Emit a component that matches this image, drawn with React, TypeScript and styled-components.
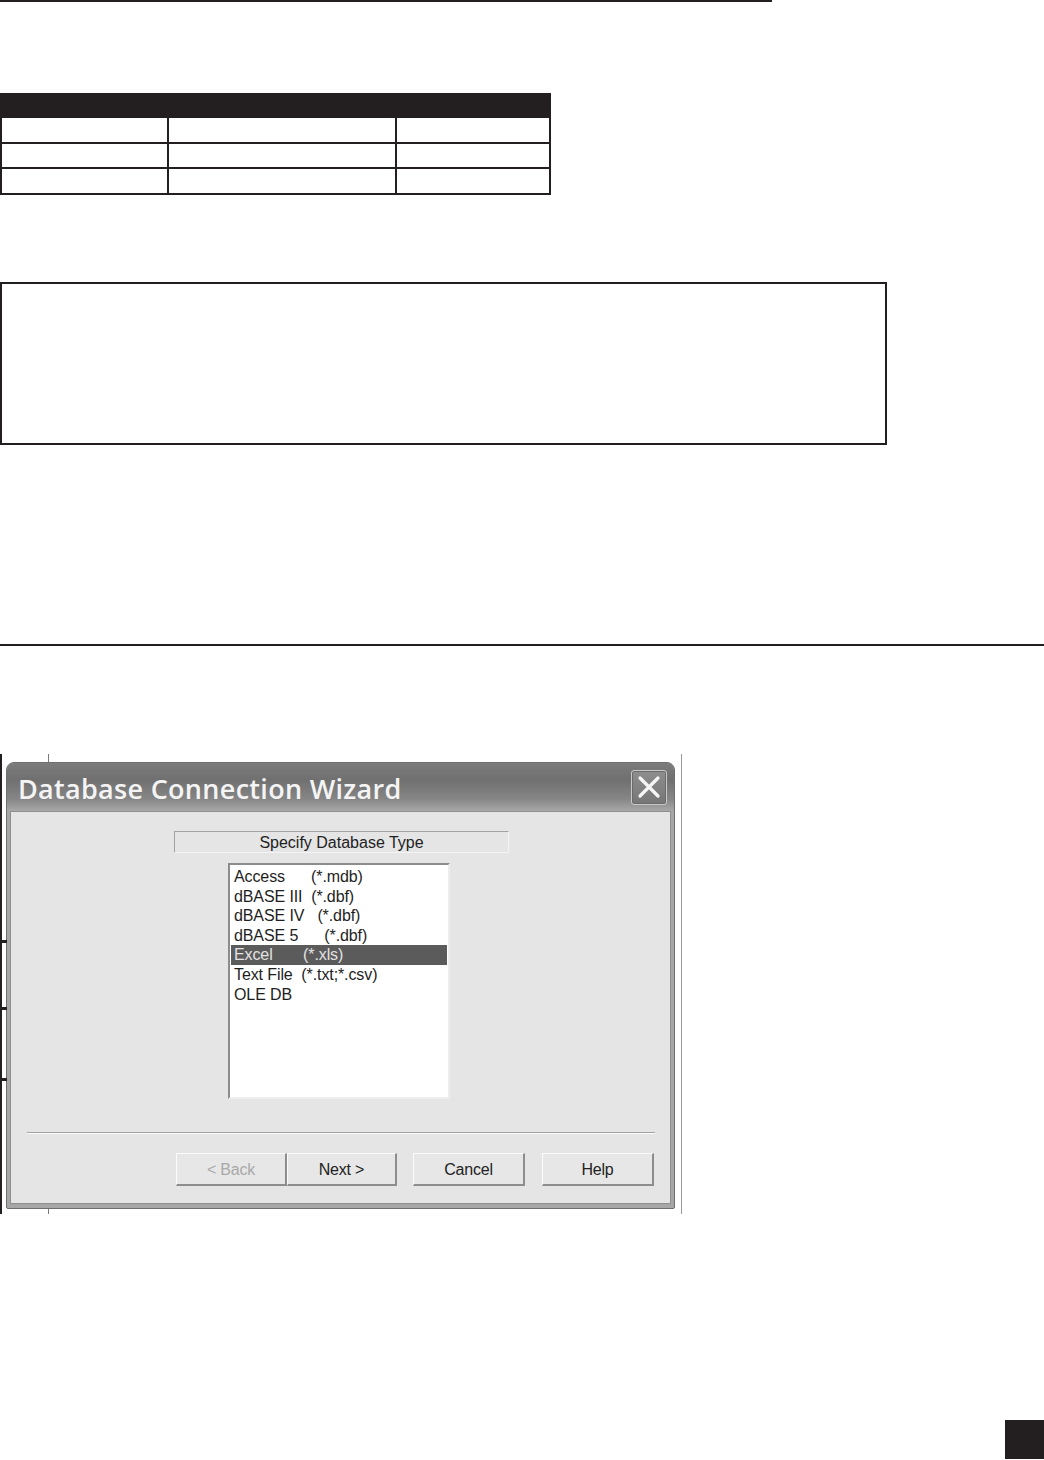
import React from 'react';
import styled, { createGlobalStyle } from 'styled-components';

const GlobalStyle = createGlobalStyle`
  html, body {
    margin: 0;
    padding: 0;
    background: #ffffff;
  }
  body {
    font-family: "Liberation Sans", Arial, sans-serif;
  }
`;

const Page = styled.div`
  width: 1044px;
  height: 1460px;
  display: flex;
  flex-direction: column;
  overflow: hidden;
`;

const Rule = styled.div<{ width?: number; top: number }>`
  width: ${({ width }) => (width ? `${width}px` : '100%')};
  height: 2px;
  margin-top: ${({ top }) => top}px;
  background: #231f20;
  flex-shrink: 0;
`;

const TableGrid = styled.div`
  margin-top: 91px;
  width: 551px;
  display: grid;
  grid-template-columns: 169px 228px 154px;
`;

const HeaderBand = styled.div`
  grid-column: 1 / -1;
  height: 25px;
  background: #231f20;
`;

const Cell = styled.div<{ first?: boolean; tall?: boolean }>`
  box-sizing: border-box;
  height: ${({ tall }) => (tall ? 26 : 25)}px;
  border-bottom: 2px solid #231f20;
  border-right: 2px solid #231f20;
  border-left: ${({ first }) => (first ? '2px solid #231f20' : 'none')};
`;

const NoteBox = styled.div`
  margin-top: 87px;
  box-sizing: border-box;
  width: 887px;
  height: 163px;
  border: 2px solid #231f20;
`;

const ScreenFrame = styled.div`
  position: relative;
  margin-top: 108px;
  box-sizing: border-box;
  width: 682px;
  height: 460px;
  border-left: 2px solid #231f20;
  border-right: 1px solid #9a9a9a;
  padding: 8px 0 0 4px;
`;

const Tick = styled.div<{ top: number }>`
  position: absolute;
  left: -2px;
  top: ${({ top }) => top}px;
  width: 7px;
  height: 3px;
  background: #231f20;
`;

const Stub = styled.div<{ bottom?: boolean }>`
  position: absolute;
  left: 46px;
  width: 1px;
  background: #7a7a7a;
  ${({ bottom }) => (bottom ? 'bottom: 0; height: 5px;' : 'top: 0; height: 8px;')}
`;

const Window = styled.div`
  box-sizing: border-box;
  width: 669px;
  height: 447px;
  border: 1px solid #6e6e6e;
  border-radius: 8px 8px 2px 2px;
  background: #a7a7a7;
  display: flex;
  flex-direction: column;
  padding: 0 3px 4px 3px;
  overflow: hidden;
`;

const TitleBar = styled.div`
  height: 48px;
  margin: 0 -3px;
  padding: 0 7px 0 11px;
  flex-shrink: 0;
  display: flex;
  align-items: center;
  justify-content: space-between;
  background: linear-gradient(180deg, #7c7c7c 0%, #707070 35%, #868686 75%, #a8a8a8 100%);
`;

const Title = styled.div`
  font-family: "Open Sans", "DejaVu Sans", sans-serif;
  font-weight: 600;
  font-size: 27px;
  color: #f4f4f4;
  letter-spacing: 0.3px;
  margin-top: 3px;
`;

const CloseButton = styled.div`
  box-sizing: border-box;
  width: 36px;
  height: 35px;
  border: 1px solid #c9c9c9;
  border-radius: 3px;
  background: linear-gradient(180deg, #8e8e8e, #767676);
  display: flex;
  align-items: center;
  justify-content: center;
  box-shadow: inset 0 0 0 1px #6a6a6a;
`;

const Client = styled.div`
  flex: 1;
  background: #e5e5e5;
  border: 1px solid #8f8f8f;
  display: flex;
  flex-direction: column;
`;

const GroupLabel = styled.div`
  box-sizing: border-box;
  margin: 19px 0 0 163px;
  width: 335px;
  height: 22px;
  border: 1px solid #a3a3a3;
  border-right-color: #f4f4f4;
  border-bottom-color: #f4f4f4;
  font-size: 16px;
  color: #222;
  text-align: center;
  line-height: 21px;
`;

const ListBox = styled.div`
  box-sizing: border-box;
  margin: 10px 0 0 217px;
  width: 222px;
  height: 236px;
  background: #ffffff;
  border: 2px solid #8c8c8c;
  border-right-color: #ededed;
  border-bottom-color: #ededed;
  padding: 2px 1px 0 1px;
`;

const ListItem = styled.div<{ selected?: boolean }>`
  height: 19.6px;
  line-height: 19.6px;
  padding-left: 3px;
  font-size: 16px;
  letter-spacing: -0.1px;
  white-space: pre;
  color: ${({ selected }) => (selected ? '#e2e2e2' : '#1e1e1e')};
  background: ${({ selected }) => (selected ? '#5b5b5b' : 'transparent')};
`;

const Separator = styled.div`
  margin: 33px 15px 0 16px;
  height: 1px;
  background: #a2a2a2;
  border-bottom: 1px solid #fbfbfb;
`;

const ButtonRow = styled.div`
  margin: 19px 0 0 165px;
  display: flex;
`;

const DialogButton = styled.div<{ w: number; gap?: number; disabled?: boolean }>`
  box-sizing: border-box;
  width: ${({ w }) => w}px;
  height: 33px;
  margin-left: ${({ gap }) => gap ?? 0}px;
  border: 1px solid #fbfbfb;
  border-right: 2px solid #8d8d8d;
  border-bottom: 2px solid #8d8d8d;
  background: #e7e7e7;
  display: flex;
  align-items: center;
  justify-content: center;
  padding-top: 2px;
  font-size: 16px;
  letter-spacing: -0.2px;
  color: ${({ disabled }) => (disabled ? '#a9a9a9' : '#222')};
`;

const Corner = styled.div`
  margin-top: 206px;
  margin-left: auto;
  width: 39px;
  height: 39px;
  background: #231f20;
  flex-shrink: 0;
`;

const items = [
  'Access      (*.mdb)',
  'dBASE III  (*.dbf)',
  'dBASE IV   (*.dbf)',
  'dBASE 5      (*.dbf)',
  'Excel       (*.xls)',
  'Text File  (*.txt;*.csv)',
  'OLE DB',
];

const App: React.FC = () => {
  return (
    <Page>
      <GlobalStyle />
      <Rule width={772} top={0} />

      <TableGrid>
        <HeaderBand />
        {[true, false, true].map((tall, row) => (
          <React.Fragment key={row}>
            <Cell first tall={tall} />
            <Cell tall={tall} />
            <Cell tall={tall} />
          </React.Fragment>
        ))}
      </TableGrid>

      <NoteBox />

      <Rule top={199} />

      <ScreenFrame>
        <Stub />
        <Stub bottom />
        <Tick top={186} />
        <Tick top={253} />
        <Tick top={324} />
        <Window>
          <TitleBar>
            <Title>Database Connection Wizard</Title>
            <CloseButton>
              <svg width="24" height="24" viewBox="0 0 24 24">
                <path d="M3 3 L21 21 M21 3 L3 21" stroke="#f6f6f6" strokeWidth="3.2" strokeLinecap="round" />
              </svg>
            </CloseButton>
          </TitleBar>
          <Client>
            <GroupLabel>Specify Database Type</GroupLabel>
            <ListBox>
              {items.map((item) => (
                <ListItem key={item} selected={item.startsWith('Excel')}>
                  {item}
                </ListItem>
              ))}
            </ListBox>
            <Separator />
            <ButtonRow>
              <DialogButton w={111} disabled>
                {'< Back'}
              </DialogButton>
              <DialogButton w={110}>{'Next >'}</DialogButton>
              <DialogButton w={112} gap={16}>
                Cancel
              </DialogButton>
              <DialogButton w={112} gap={17}>
                Help
              </DialogButton>
            </ButtonRow>
          </Client>
        </Window>
      </ScreenFrame>

      <Corner />
    </Page>
  );
};

export default App;
